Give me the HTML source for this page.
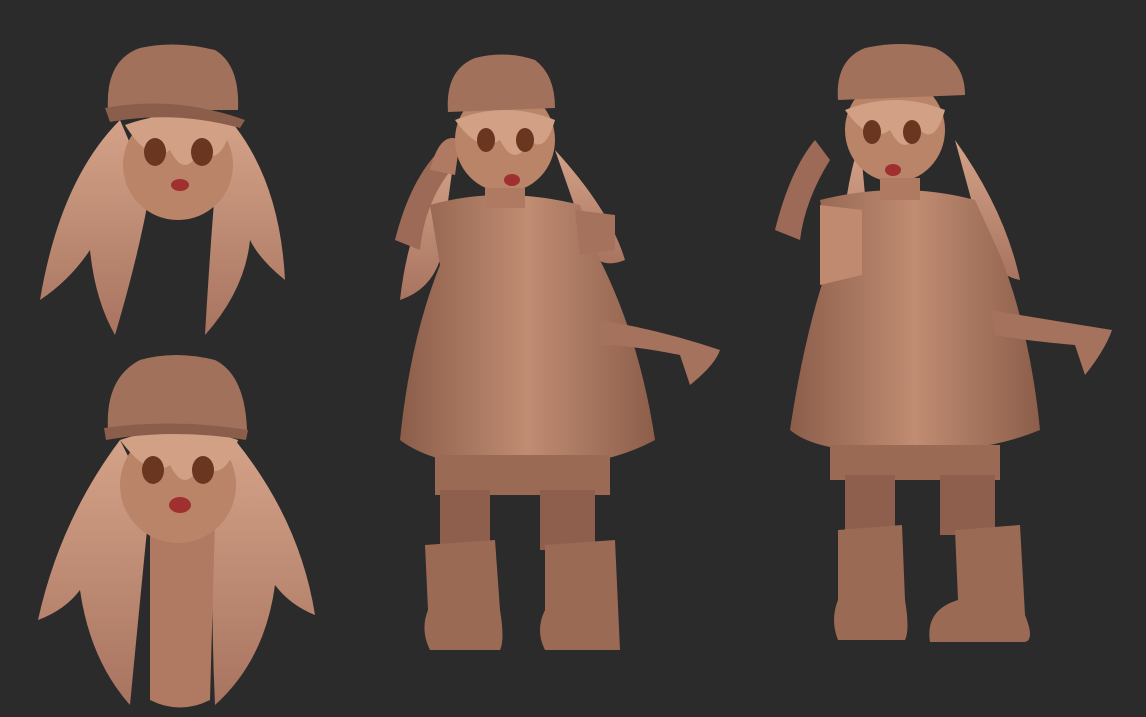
<!DOCTYPE html>
<html><head><meta charset="utf-8"><style>
html,body{margin:0;padding:0;background:#2b2b2b;}
svg{display:block}
</style></head><body>
<svg width="1146" height="717" viewBox="0 0 1146 717" xmlns="http://www.w3.org/2000/svg">
<defs>
<linearGradient id="g" x1="0" y1="0" x2="1" y2="0">
<stop offset="0" stop-color="#8c5e4a"/><stop offset="0.5" stop-color="#c08c72"/><stop offset="1" stop-color="#8c5e4a"/>
</linearGradient>
<linearGradient id="h" x1="0" y1="0" x2="0" y2="1">
<stop offset="0" stop-color="#d4a288"/><stop offset="1" stop-color="#a87460"/>
</linearGradient>
</defs>
<rect width="1146" height="717" fill="#2b2b2b"/>

<!-- Head 1 -->
<g>
<path d="M120 120 Q60 180 40 300 Q70 280 90 250 Q95 300 115 335 Q140 250 150 190 Z" fill="url(#h)"/>
<path d="M230 120 Q280 180 285 280 Q260 260 250 240 Q245 290 205 335 Q210 250 215 190 Z" fill="url(#h)"/>
<ellipse cx="178" cy="165" rx="55" ry="55" fill="#b98468"/>
<path d="M125 125 Q150 165 170 150 Q185 180 200 150 Q220 170 232 125 Q180 105 125 125Z" fill="#d1a085"/>
<ellipse cx="155" cy="152" rx="11" ry="14" fill="#6a3620"/><ellipse cx="202" cy="152" rx="11" ry="14" fill="#6a3620"/>
<ellipse cx="180" cy="185" rx="9" ry="6" fill="#a03030"/>
<path d="M108 110 Q105 60 140 48 Q175 40 215 50 Q240 65 238 110 Z" fill="#a1715c"/>
<path d="M105 108 Q175 95 245 120 L240 128 Q175 110 110 122 Z" fill="#8a5e4a"/>
</g>

<!-- Head 2 -->
<g>
<path d="M120 440 Q60 520 38 620 Q65 610 80 590 Q90 660 130 705 Q140 600 150 500 Z" fill="url(#h)"/>
<path d="M235 440 Q300 520 315 615 Q290 605 275 585 Q265 660 215 705 Q210 600 215 500 Z" fill="url(#h)"/>
<path d="M150 520 Q180 560 215 520 L210 700 Q180 715 150 700 Z" fill="#b07a62"/>
<ellipse cx="178" cy="485" rx="58" ry="58" fill="#b98468"/>
<path d="M120 440 Q150 480 170 465 Q185 495 200 465 Q225 485 238 440 Q180 420 120 440Z" fill="#d1a085"/>
<ellipse cx="153" cy="470" rx="11" ry="14" fill="#6a3620"/><ellipse cx="203" cy="470" rx="11" ry="14" fill="#6a3620"/>
<ellipse cx="180" cy="505" rx="11" ry="8" fill="#a03030"/>
<path d="M108 430 Q105 378 140 360 Q175 350 215 360 Q245 375 247 430 Z" fill="#a1715c"/>
<path d="M104 428 Q175 418 248 430 L246 440 Q175 428 106 440 Z" fill="#8a5e4a"/>
</g>

<!-- Figure middle -->
<g>
<path d="M455 150 Q410 210 400 300 Q430 290 440 260 Z" fill="url(#h)"/>
<path d="M555 150 Q610 210 625 260 Q600 270 590 250 Z" fill="url(#h)"/>
<path d="M395 240 Q410 180 440 150 L455 165 Q425 200 420 250 Z" fill="#9c6a56"/>
<path d="M430 170 Q440 130 460 140 L455 175 Z" fill="#b07a62"/>
<path d="M430 205 Q500 185 580 205 L600 260 Q640 340 655 440 Q600 470 520 465 Q440 470 400 440 Q410 340 440 265 Z" fill="url(#g)"/>
<path d="M575 210 L615 215 L615 250 L580 255 Z" fill="#a5725d"/>
<path d="M600 320 Q660 330 720 350 Q715 365 690 385 L680 355 Q630 345 600 345 Z" fill="#a5725d"/>
<path d="M435 455 L610 455 L610 495 L435 495 Z" fill="#9a6a55"/>
<rect x="440" y="490" width="50" height="60" fill="#8e5f4c"/><rect x="540" y="490" width="55" height="60" fill="#8e5f4c"/>
<path d="M425 545 L495 540 L500 610 Q505 640 500 650 L430 650 Q420 630 428 610 Z" fill="#9a6a55"/>
<path d="M545 545 L615 540 L620 650 L545 650 Q535 630 545 610 Z" fill="#9a6a55"/>
<ellipse cx="505" cy="140" rx="50" ry="52" fill="#b98468"/>
<path d="M455 120 Q480 155 500 140 Q515 170 530 140 Q545 155 555 120 Q505 100 455 120Z" fill="#d1a085"/>
<ellipse cx="486" cy="140" rx="9" ry="12" fill="#6a3620"/><ellipse cx="525" cy="140" rx="9" ry="12" fill="#6a3620"/>
<ellipse cx="512" cy="180" rx="8" ry="6" fill="#a03030"/>
<path d="M448 112 Q445 70 475 58 Q505 50 535 60 Q555 75 555 108 Z" fill="#a1715c"/>
<rect x="485" y="188" width="40" height="20" fill="#b07a62"/>
</g>

<!-- Figure right -->
<g>
<path d="M860 140 Q835 220 845 300 Q865 285 870 250 Z" fill="url(#h)"/>
<path d="M955 140 Q1005 210 1020 280 Q995 275 985 250 Z" fill="url(#h)"/>
<path d="M775 230 Q790 170 815 140 L830 160 Q805 200 800 240 Z" fill="#9c6a56"/>
<path d="M820 200 Q900 180 975 200 L1000 255 Q1030 330 1040 430 Q980 455 900 450 Q820 455 790 430 Q805 330 830 260 Z" fill="url(#g)"/>
<path d="M820 205 L862 210 L862 275 L820 285 Z" fill="#c08a70"/>
<path d="M990 310 Q1050 320 1112 330 Q1105 350 1085 375 L1075 345 Q1020 340 995 335 Z" fill="#a5725d"/>
<path d="M830 445 L1000 445 L1000 480 L830 480 Z" fill="#9a6a55"/>
<rect x="845" y="475" width="50" height="60" fill="#8e5f4c"/><rect x="940" y="475" width="55" height="60" fill="#8e5f4c"/>
<path d="M838 530 L902 525 L905 600 Q910 630 905 640 L838 640 Q830 620 838 600 Z" fill="#9a6a55"/>
<path d="M955 530 L1020 525 L1025 615 Q1035 640 1025 642 L930 642 Q925 610 958 600 Z" fill="#9a6a55"/>
<ellipse cx="895" cy="130" rx="50" ry="52" fill="#b98468"/>
<path d="M845 110 Q870 145 890 130 Q905 160 920 130 Q935 145 945 110 Q895 90 845 110Z" fill="#d1a085"/>
<ellipse cx="872" cy="132" rx="9" ry="12" fill="#6a3620"/><ellipse cx="912" cy="132" rx="9" ry="12" fill="#6a3620"/>
<ellipse cx="893" cy="170" rx="8" ry="6" fill="#a03030"/>
<path d="M838 100 Q835 60 865 48 Q900 40 935 48 Q965 62 965 95 Z" fill="#a1715c"/>
<rect x="880" y="178" width="40" height="22" fill="#b07a62"/>
</g>
</svg>
</body></html>
